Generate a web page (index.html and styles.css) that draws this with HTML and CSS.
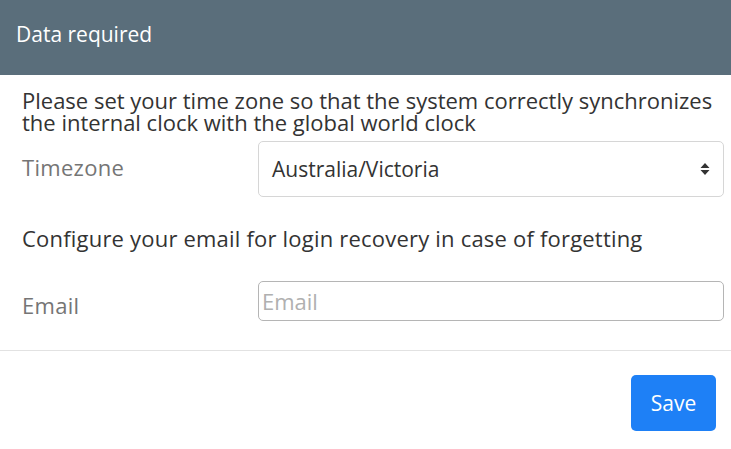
FILE: index.html
```html
<!DOCTYPE html>
<html>
<head>
<meta charset="utf-8">
<link rel="stylesheet" href="styles.css">
</head>
<body>
<div class="modal">
  <div class="header"><span class="title">Data required</span></div>
  <div class="body">
    <p class="intro">Please set your time zone so that the system correctly synchronizes the internal clock with the global world clock</p>
    <div class="row tz-row">
      <label class="label">Timezone</label>
      <div class="select">
        <span>Australia/Victoria</span>
        <svg class="arrows" width="10" height="14" viewBox="0 0 10 14"><path d="M5 1 L9.5 6 H0.5 Z M5 13 L0.5 8 H9.5 Z" fill="#333"/></svg>
      </div>
    </div>
    <p class="intro email-intro">Configure your email for login recovery in case of forgetting</p>
    <div class="row email-row">
      <label class="label">Email</label>
      <div class="input"><span class="placeholder">Email</span></div>
    </div>
  </div>
  <div class="footer">
    <button class="save">Save</button>
  </div>
</div>
</body>
</html>
```
FILE: styles.css
```css
* { box-sizing: border-box; }
html, body { margin: 0; padding: 0; background: #fff; }
body { font-family: "Open Sans", sans-serif; color: #333; }
.modal { width: 731px; height: 449px; display: flex; flex-direction: column; }
.header { height: 75px; background: #5a6e7b; padding: 20px 16px 0; }
.title { color: #fff; font-size: 21px; }
.body { padding: 14px 4px 0 22px; height: 276px; border-bottom: 1px solid #e2e2e2; }
.intro { margin: 0; font-size: 22px; line-height: 22px; color: #333; letter-spacing: 0; }
.row { display: flex; align-items: center; }
.label { width: 236px; font-size: 22px; color: #757575; letter-spacing: 0.3px; }
.tz-row { margin-top: 8px; }
.tz-row .label { margin-top: -4px; }
.select { flex: 1; height: 56px; margin-right: 3px; border: 1px solid #d6d6d6; border-radius: 5px; display: flex; align-items: center; justify-content: space-between; padding: 0 13px 0 13px; font-size: 21px; color: #333; }
.email-intro { margin-top: 30px; letter-spacing: 0.2px; }
.email-row { margin-top: 32px; }
.email-row .label { margin-top: 8px; }
.input { flex: 1; height: 40px; margin-right: 3px; border: 1px solid #b5b5b5; border-radius: 5px; display: flex; align-items: center; padding: 0 3px; }
.placeholder { font-size: 22px; color: #b0b0b0; }
.footer { flex: 1; display: flex; justify-content: flex-end; align-items: flex-start; padding: 24px 15px 0; }
.save { width: 85px; height: 56px; border: none; border-radius: 5px; background: #1e80f6; color: #fff; font-family: inherit; font-size: 21px; padding: 0; }
```
